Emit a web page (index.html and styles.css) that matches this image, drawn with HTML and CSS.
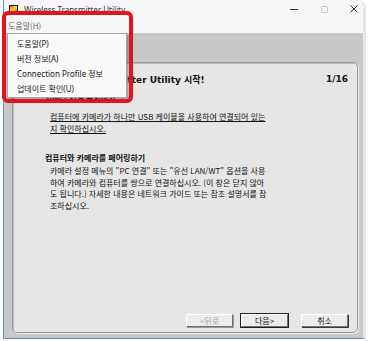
FILE: index.html
```html
<!DOCTYPE html>
<html lang="ko">
<head>
    <meta charset="UTF-8">
    <meta name="viewport" content="width=device-width, initial-scale=1.0">
    <title>Wireless Transmitter Utility</title>
    <link rel="stylesheet" href="styles.css">
</head>
<body>
    <div class="window">
        <div class="titlebar">
            <svg class="app-icon" width="9" height="9" viewBox="0 0 9 9">
                <defs>
                    <linearGradient id="ig" x1="0" y1="0" x2="1" y2="1">
                        <stop offset="0" stop-color="#ff2a6a"/>
                        <stop offset="0.45" stop-color="#ffd21a"/>
                        <stop offset="1" stop-color="#22b14c"/>
                    </linearGradient>
                </defs>
                <rect x="0.5" y="0.5" width="8" height="8" fill="url(#ig)" stroke="#222"/>
            </svg>
            <span class="title">Wireless Transmitter Utility</span>
            <div class="controls">
                <svg class="ctl" width="8" height="8" viewBox="0 0 8 8"><path d="M0 4.5H8" stroke="#333" stroke-width="1"/></svg>
                <svg class="ctl" width="8" height="8" viewBox="0 0 8 8"><rect x="1.5" y="1.5" width="6" height="6" rx="1" fill="none" stroke="#c4c4c4"/></svg>
                <svg class="ctl" width="8" height="8" viewBox="0 0 8 8"><path d="M0.5 0.5L7.5 7.5M7.5 0.5L0.5 7.5" stroke="#333" stroke-width="1"/></svg>
            </div>
        </div>

        <div class="menubar">
            <span class="menu-item">도움말(H)</span>
        </div>

        <div class="client">
            <div class="panel">
                <div class="step-head">
                    <span class="step-title">Wireless Transmitter Utility 시작!</span>
                    <span class="step-count">1/16</span>
                </div>

                <div class="section-title">카메라 연결 확인하기</div>
                <p class="note">컴퓨터에 카메라가 하나만 USB 케이블을 사용하여 연결되어 있는<br>지 확인하십시오.</p>

                <div class="section-title pairing">컴퓨터와 카메라를 페어링하기</div>
                <p class="text">카메라 설정 메뉴의 "PC 연결" 또는 "유선 LAN/WT" 옵션을 사용<br>하여 카메라와 컴퓨터를 쌍으로 연결하십시오. (이 창은 닫지 않아<br>도 됩니다.) 자세한 내용은 네트워크 가이드 또는 참조 설명서를 참<br>조하십시오.</p>

                <div class="buttons">
                    <button class="btn" disabled>&lt;뒤로</button>
                    <button class="btn default">다음&gt;</button>
                    <button class="btn cancel">취소</button>
                </div>
            </div>
        </div>

        <!-- open help menu -->
        <div class="dropdown">
            <div class="dropdown-item">도움말(P)</div>
            <div class="dropdown-item">버전 정보(A)</div>
            <div class="dropdown-item">Connection Profile 정보</div>
            <div class="dropdown-item">업데이트 확인(U)</div>
        </div>

        <div class="highlight"></div>
    </div>
</body>
</html>
```

FILE: styles.css
```css
:root {
    --frame-color: #6b8ab3;
    --client-color: #c8c8c8;
    --panel-color: #e6e6e6;
    --text-color: #111;
    --mark-color: #e3141d;
}

body {
    margin: 0;
    background: white;
    font-family: "Noto Sans", "Noto Sans CJK KR", sans-serif;
    color: var(--text-color);
}

.window {
    position: relative;
    box-sizing: border-box;
    width: 363px;
    height: 339px;
    margin-left: 3px;
    display: flex;
    flex-direction: column;
    border-left: 1px solid var(--frame-color);
    border-bottom: 1px solid var(--frame-color);
    border-right: 3px solid #e4e8ec;
    border-top-right-radius: 8px;
    background: #f7f7f7;
}

.titlebar {
    height: 18px;
    display: flex;
    align-items: center;
    padding-left: 5px;
}

.app-icon {
    margin-right: 6px;
}

.title {
    font-size: 8px;
    color: #333;
}

.controls {
    margin-left: auto;
    display: flex;
    align-items: center;
    gap: 22px;
    padding-right: 5px;
}

.ctl {
    display: block;
}

.menubar {
    height: 15px;
    display: flex;
    align-items: center;
    padding-left: 4px;
}

.menu-item {
    font-size: 8px;
    color: #666;
    font-family: "Noto Sans CJK KR", sans-serif;
}

.client {
    flex: 1;
    display: flex;
    padding: 29px 5px 5px 8px;
    background: var(--client-color);
}

.panel {
    flex: 1;
    display: flex;
    flex-direction: column;
    padding: 10px 9px 5px 28px;
    border: 1px solid #999;
    border-radius: 5px;
    background: var(--panel-color);
    box-shadow: inset 1px 1px 0 #bdbdbd, 1px 1px 0 #efefef;
    font-family: "Noto Sans CJK KR", sans-serif;
    font-size: 8px;
}

.step-head {
    display: flex;
    justify-content: space-between;
    align-items: center;
    height: 12px;
    font-family: "DejaVu Sans", "Noto Sans CJK KR", sans-serif;
    font-size: 9px;
    font-weight: bold;
}

.section-title {
    margin-top: 7px;
    margin-left: 4px;
    line-height: 12px;
    font-weight: bold;
}

.section-title.pairing {
    margin-top: 17px;
}

.note {
    margin: 7px 0 0 9px;
    line-height: 12px;
    text-decoration: underline;
}

.text {
    margin: 1px 0 0 9px;
    line-height: 11.5px;
}

.buttons {
    margin-top: auto;
    display: flex;
    justify-content: flex-end;
    gap: 8px;
}

.btn {
    box-sizing: border-box;
    width: 47px;
    height: 13px;
    padding: 0;
    font-family: "Noto Sans CJK KR", sans-serif;
    font-size: 8px;
    line-height: 9px;
    color: var(--text-color);
    background: #ececec;
    border: 1px solid;
    border-color: #fff #6f6f6f #6f6f6f #fff;
    box-shadow: 1px 1px 0 #3a3a3a;
}

.btn:disabled {
    color: #a6a6a6;
    box-shadow: 1px 1px 0 #9a9a9a;
}

.btn.default {
    outline: 1px solid #222;
}

.btn.cancel {
    margin-left: 5px;
}

.dropdown {
    position: absolute;
    left: 3px;
    top: 33px;
    box-sizing: border-box;
    width: 120px;
    height: 65px;
    padding-top: 2px;
    background: #f9f9f9;
    border: 1px solid #a6a6a6;
    box-shadow: 2px 2px 2px rgba(0, 0, 0, 0.3);
}

.dropdown-item {
    height: 15px;
    line-height: 15px;
    padding-left: 9px;
    font-size: 8px;
    color: #1a1a1a;
}

.highlight {
    position: absolute;
    left: -2px;
    top: 11px;
    box-sizing: border-box;
    width: 131px;
    height: 92px;
    border: 4px solid var(--mark-color);
    border-radius: 6px;
}
```
